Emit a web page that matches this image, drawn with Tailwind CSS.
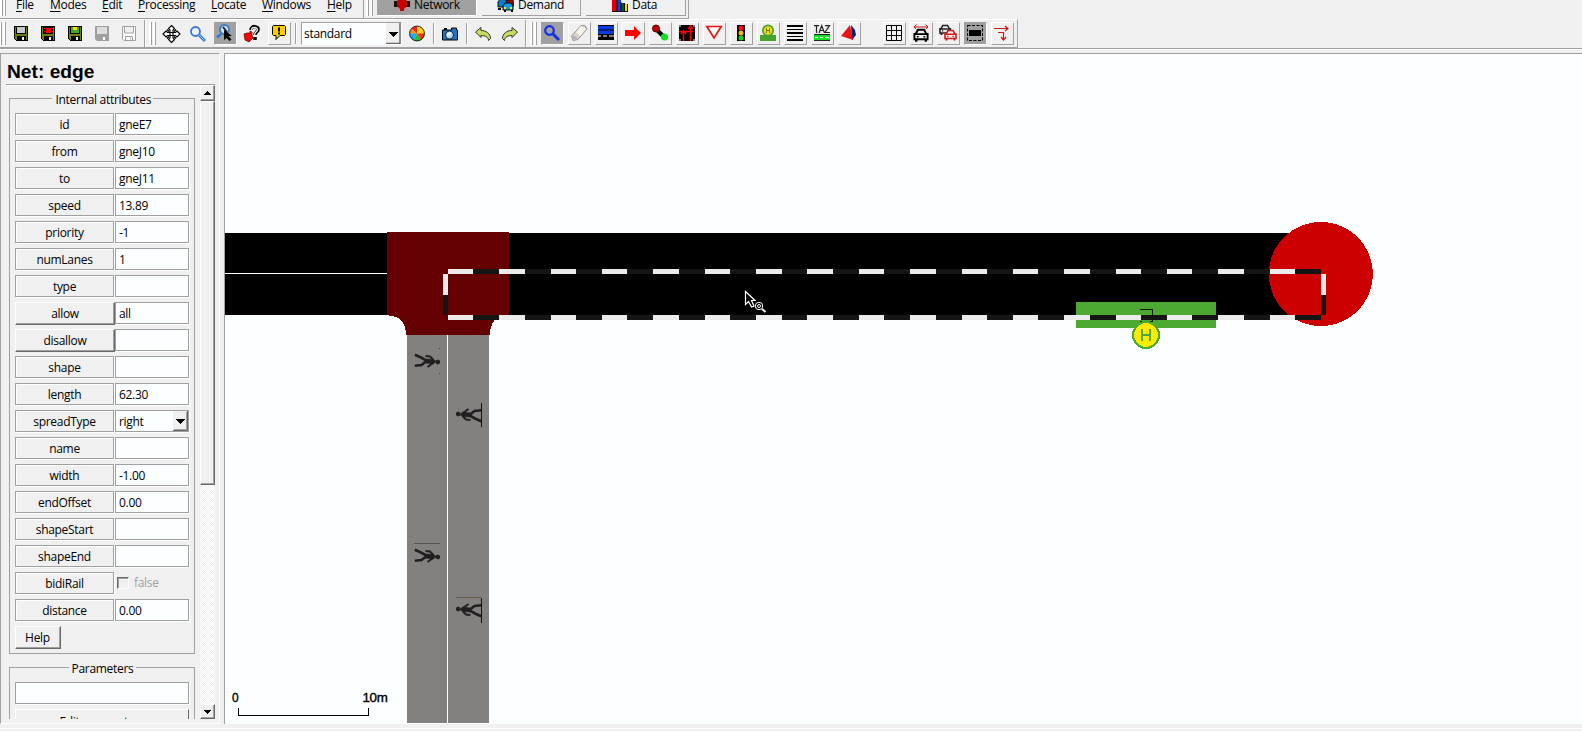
<!DOCTYPE html>
<html lang="en">
<head>
<meta charset="utf-8">
<title>netedit</title>
<script src="https://cdn.jsdelivr.net/npm/@tailwindcss/browser@4"></script>
</head>
<body class="w-[1582px] h-[731px] overflow-hidden bg-[#f0f0f0] flex flex-col text-black text-[12px] leading-4 tracking-[-0.3px] font-['Open_Sans','Noto_Sans',sans-serif]">

<!-- menu bar and supermodes -->
<div class="h-[19px] shrink-0 flex overflow-hidden">
  <div class="w-[364px] flex border-b border-r border-[#a0a0a0]">
    <div class="w-[6px] flex gap-px"><i class="w-[3px] h-[16px] border-r border-[#a0a0a0] bg-white"></i><i class="w-[2px] h-[16px] border-r border-[#a0a0a0] bg-white"></i></div>
    <div class="flex -mt-[3px] ml-[10px]" id="menu"></div>
  </div>
  <div class="w-[325px] flex border-b border-r border-[#a0a0a0] pl-[2px]">
    <div class="w-[11px] flex gap-px"><i class="w-[3px] h-[16px] border-r border-[#a0a0a0] bg-white"></i><i class="w-[3px] h-[16px] border-r border-[#a0a0a0] bg-white"></i></div>
    <div class="flex gap-[5px]">
      <div class="w-[100px] h-[16px] bg-[#a0a0a0] border-b border-r border-white flex pl-[17px] gap-[4px]"><svg class="w-[16px] h-[12px]" viewBox="0 0 16 12"><path d="M0 1h16v6H0z" fill="#111"/><path d="M5-2h5l3 3v5l-3 3v2H6V9L3 6V1z" fill="#c80000"/></svg><span class="-mt-[3px] w-[50px]">Network</span></div>
      <div class="w-[99px] h-[16px] border-b border-r border-[#a0a0a0] flex pl-[15px] gap-[4px]"><svg class="w-[17px] h-[12px]" viewBox="0 0 17 12"><path d="M8 0h8l1 6H9z" fill="#b00000" stroke="#111"/><path d="M1 2l2-3h5l2 3v5H1z" fill="#0b7dc0" stroke="#111"/><path d="M6 6l2-3h6l2 3v4H6z" fill="#1199e8" stroke="#111"/><path d="M1 8h3v2H1zM7 10h2v2H7zM14 10h2v2h-2z"/><path d="M7 7h2v2H7zM13 7h2v2h-2z" fill="#ffe600"/></svg><span class="-mt-[3px] w-[50px]">Demand</span></div>
      <div class="w-[100px] h-[16px] border-b border-r border-[#a0a0a0] flex pl-[26px] gap-[4px]"><svg class="w-[16px] h-[12px]" viewBox="0 0 16 12"><path d="M0 0h5v11H0z" fill="#e00000"/><path d="M5 0h4v11H5z" fill="#1240e0"/><path d="M9 3h3v8H9z" fill="#005c20"/><path d="M12 4h3v7h-3z" fill="#ffd800"/><path d="M0 11.500h16M5 0v11M9 2v9M12.500 3v8M15.500 4v8" stroke="#111" fill="none"/></svg><span class="-mt-[3px] w-[40px]">Data</span></div>
    </div>
  </div>
</div>

<!-- toolbars -->
<div class="h-[31px] shrink-0 border-b border-white">
<div class="h-[30px] border-b border-[#a0a0a0]">
<div class="h-[29px] w-[1018px] border-t border-t-white border-b border-r border-[#a0a0a0] flex pt-[2px]">
  <div class="w-[145px] flex border-r border-[#a0a0a0] -mt-[2px] pt-[2px]">
    <div class="w-[11px] flex gap-px"><i class="w-[2px] h-[23px] border-r border-[#a0a0a0] bg-white"></i><i class="w-[3px] h-[23px] border-r border-[#a0a0a0] bg-white"></i></div>
    <div class="flex gap-[4px]" id="bar1"></div>
  </div>
  <div class="w-[381px] flex border-r border-[#a0a0a0] -mt-[2px] pt-[2px] border-l border-l-white">
    <div class="w-[14px] pl-[3px] flex gap-px"><i class="w-[3px] h-[23px] border-r border-[#a0a0a0] bg-white"></i><i class="w-[3px] h-[23px] border-r border-[#a0a0a0] bg-white"></i></div>
    <div class="flex gap-[4px]" id="bar2"></div>
    <div class="w-[2px] h-[21px] bg-white border-l border-[#a0a0a0] ml-[4px] mt-px"></div>
    <div class="w-[101px] h-[23px] ml-[4px] bg-[#fcffff] border border-[#a0a0a0] border-b-white border-r-white flex justify-between items-center pl-[2px]"><span class="w-[50px]">standard</span><svg class="w-[15px] h-[21px]" viewBox="0 0 15 21"><path d="M0 0h15v21H0z" fill="#f0f0f0"/><path d="M14 0v20.500H0" fill="none" stroke="#696969" stroke-width="1.500"/><path d="M3 9h9v1h-1v1h-1v1H9v1H8v1H7v-1H6v-1H5v-1H4v-1H3z"/></svg></div>
    <div class="ml-[4px]" id="bar3"></div>
    <div class="w-[2px] h-[21px] bg-white border-l border-[#a0a0a0] ml-[4px] mt-px"></div>
    <div class="ml-[4px]" id="bar4"></div>
    <div class="w-[2px] h-[21px] bg-white border-l border-[#a0a0a0] ml-[4px] mt-px"></div>
    <div class="ml-[4px] flex gap-[4px]" id="bar5"></div>
  </div>
  <div class="flex border-l border-white">
    <div class="w-[14px] pl-[3px] flex gap-px"><i class="w-[3px] h-[23px] border-r border-[#a0a0a0] bg-white"></i><i class="w-[3px] h-[23px] border-r border-[#a0a0a0] bg-white"></i></div>
    <div class="flex gap-[4px]" id="bar6"></div>
    <div class="flex gap-[4px] ml-[22px]" id="bar7"></div>
  </div>
</div>
</div>
</div>

<div class="flex mt-[3px] h-[671px] shrink-0">
  <!-- attribute frame -->
  <div class="w-[220px] border-l border-t border-[#a0a0a0] border-r border-b border-r-white border-b-white pl-[5px]">
    <div class="w-[209px] h-[31px] border-b border-[#a0a0a0] shadow-[0_1px_0_#fff] pl-px pt-[7px] font-['Liberation_Sans',Arial,sans-serif] font-bold text-[19.200px] leading-[22px] tracking-normal">Net: edge</div>
    <div class="flex h-[634px]">
      <div class="w-[194px] pl-[3px] pt-[5px] h-[634px] overflow-hidden">
        <fieldset class="w-[186px] h-[564px] border border-[#a0a0a0] px-[5px]">
          <legend class="mx-auto px-[4px] h-[16px] w-[101px] text-center whitespace-nowrap leading-[20px]">Internal attributes</legend>
          <div class="flex flex-col gap-[5px] pt-[7px]" id="rows"></div>
          <div class="mt-[5px] w-[46px] h-[23px] border border-white border-r-[#696969] border-b-[#696969] text-center leading-[22px] pr-px shadow-[inset_-1px_-1px_0_#a0a0a0]">Help</div>
        </fieldset>
        <fieldset class="mt-[5px] w-[186px] h-[120px] border border-[#a0a0a0] px-[5px]">
          <legend class="mx-auto px-[3px] h-[16px] w-[67px] text-center whitespace-nowrap leading-[20px]">Parameters</legend>
          <div class="mt-[7px] w-[174px] h-[22px] border border-[#a0a0a0] bg-[#fcffff] shadow-[1px_1px_0_#fff]"></div>
          <div class="mt-[5px] w-[174px] h-[24px] border border-white border-r-[#696969] border-b-[#696969] text-center leading-[23px]">Edit parameters</div>
        </fieldset>
      </div>
      <div class="w-[15px] h-[634px] flex flex-col bg-[#f6f7f7] bg-[repeating-conic-gradient(#fff_0_25%,#efefef_0_50%)] bg-[length:2px_2px]">
        <div class="h-[16px] bg-[#f0f0f0] border border-white border-r-[#696969] border-b-[#696969] shadow-[inset_-1px_-1px_0_#a0a0a0] flex items-center justify-center"><svg class="w-[8px] h-[4px]" viewBox="0 0 8 4"><path d="M0 4h7V3H6V2H5V1H4V0H3v1H2v1H1v1H0z"/></svg></div>
        <div class="h-[384px] bg-[#f0f0f0] border border-white border-r-[#696969] border-b-[#696969] shadow-[inset_-1px_-1px_0_#a0a0a0]"></div>
        <div class="mt-auto h-[15px] bg-[#f0f0f0] border border-white border-r-[#696969] border-b-[#696969] shadow-[inset_-1px_-1px_0_#a0a0a0] flex items-center justify-center"><svg class="w-[8px] h-[4px]" viewBox="0 0 8 4"><path d="M0 0h7v1H6v1H5v1H4v1H3V3H2V2H1V1H0z"/></svg></div>
      </div>
    </div>
  </div>
  <!-- network view -->
  <div class="ml-[4px] w-[1358px] border-l border-t border-[#a0a0a0]">
  <svg class="block w-[1357px] h-[670px]" viewBox="225 54 1357 670" shape-rendering="crispEdges">
    <rect x="225" y="54" width="1357" height="670" fill="#fcffff"/>
    <rect x="225" y="233" width="1096" height="82"/>
    <rect x="225" y="273" width="162" height="1" fill="#fff"/>
    <rect x="407" y="335" width="82" height="388" fill="#82817f"/>
    <rect x="447" y="335" width="1" height="388" fill="#fff"/>
    <path d="M387 232H509V315Q490 315 490 335H406Q405 316 390 316L387 315z" fill="#640000"/>
    <circle cx="1320.800" cy="274" r="52" fill="#cc0000"/>
    <rect x="1076" y="302" width="140" height="26" fill="#4caa33"/>
    <g fill="none" stroke-width="5">
      <path d="M448 271.500H1321M448 317.500H1321" stroke="#151515"/>
      <path d="M448 271.500H1321M448 317.500H1321" stroke="#ebebeb" stroke-dasharray="25.400 25.953"/>
      <path d="M445.500 274v21M1323.500 274v21" stroke="#ebebeb"/>
      <path d="M445.500 295v20M1323.500 295v20" stroke="#151515"/>
    </g>
    <path d="M1140 309.500h12.500v12H1140" fill="none" stroke="#0c1408"/>
    <circle cx="1146" cy="335" r="14" fill="#4caa33"/>
    <circle cx="1146" cy="335" r="11.800" fill="#ffeb00"/>
    <path d="M1141 329h2v5h6v-5h2v12h-2v-5h-6v5h-2z" fill="#4caa33"/>
    <defs>
      <g id="walker" fill="#231f20" stroke="#231f20" shape-rendering="auto">
        <circle cx="23.800" cy="9" r="1.900"/>
        <path d="M10 6l9 .3 3 2-2.500 2.700-8-1z" stroke-width=".6"/>
        <path d="M12 7.300L7 4.500 .8 1.800M12 8.500L7.500 12 .8 12.800" fill="none" stroke-width="2.600"/>
        <path d="M19.500 7L16 3.500 11.500 3M19 10L13.500 14" fill="none" stroke-width="2"/>
      </g>
    </defs>
    <use href="#walker" x="414" y="353"/>
    <path d="M439 348.500h1M439 373.500h1" stroke="#444"/>
    <use href="#walker" x="414" y="548"/>
    <path d="M414 543.500h26" stroke="#555"/>
    <use href="#walker" transform="translate(482 423) rotate(180)"/>
    <path d="M481.500 403v24" stroke="#111"/>
    <use href="#walker" transform="translate(482 618) rotate(180)"/>
    <path d="M481.500 598v25" stroke="#111"/>
    <path d="M456 597.500h25" stroke="#6b5b48"/>
    <path d="M745.500 291.500v13l3-3 3 5.500 2.500-1-2.500-5.500h3.500z" fill="#000" stroke="#fff" stroke-width="1.200" shape-rendering="auto"/>
    <g fill="none" stroke="#fff" shape-rendering="auto"><circle cx="759" cy="306" r="3.700"/><circle cx="759" cy="306" r="1.500"/><path d="M762 309l3.500 3" stroke-width="2"/></g>
    <path d="M238.500 708v7.500h130V708" fill="none" stroke="#000"/>
    <g font-family="Liberation Sans, Arial, sans-serif" font-size="12" stroke="#000" stroke-width=".35"><text x="232" y="702" textLength="6">0</text><text x="362.500" y="702" textLength="25" lengthAdjust="spacingAndGlyphs">10m</text></g>
  </svg>
  </div>
</div>
<div class="mt-[4px] h-px shrink-0 bg-white"></div>

<script>
document.getElementById('menu').innerHTML = [['File',34],['Modes',52],['Edit',36],['Processing',73],['Locate',51],['Windows',65],['Help',30]]
  .map(([t,w]) => `<span class="shrink-0" style="width:${w}px"><u class="underline underline-offset-2">${t[0]}</u>${t.slice(1)}</span>`).join('');

const rows = [['id','gneE7'],['from','gneJ10'],['to','gneJ11'],['speed','13.89'],['priority','-1'],['numLanes','1'],['type',''],['allow','all'],['disallow',''],['shape',''],['length','62.30'],['spreadType','right'],['name',''],['width','-1.00'],['endOffset','0.00'],['shapeStart',''],['shapeEnd',''],['bidiRail','false'],['distance','0.00']];
const combo = `<svg class="w-[15px] h-[20px] ml-auto" viewBox="0 0 15 20"><path d="M0 0h15v20H0z" fill="#f0f0f0"/><path d="M14.500 0v19.500H0" fill="none" stroke="#696969"/><path d="M13.500 1v17.500H1" fill="none" stroke="#a0a0a0"/><path d="M3 8h9v1h-1v1h-1v1H9v1H8v1H7v-1H6v-1H5v-1H4V9H3z"/></svg>`;
document.getElementById('rows').innerHTML = rows.map(([k,v]) => {
  const raised = k === 'allow' || k === 'disallow';
  const label = `<div class="${raised
    ? 'w-[100px] h-[23px] -mb-px border border-white border-r-[#696969] border-b-[#696969] shadow-[inset_-1px_-1px_0_#a0a0a0] text-center leading-[22px]'
    : 'w-[99px] mr-px h-[22px] border border-[#a0a0a0] shadow-[1px_1px_0_#fff,inset_1px_1px_0_#fff] text-center leading-[21px]'}">${k}</div>`;
  const field = k === 'bidiRail'
    ? `<div class="flex items-center pl-[2px] gap-[5px] text-[#a0a0a0]"><i class="w-[12px] h-[12px] border border-white border-l-[#696969] border-t-[#696969] shadow-[inset_1px_1px_0_#a0a0a0]"></i><span>false</span></div>`
    : `<div class="w-[74px] h-[22px] border border-[#a0a0a0] bg-[#fcffff] shadow-[1px_1px_0_#fff] pl-[3px] leading-[21px] flex"><span>${v}</span>${k === 'spreadType' ? combo : ''}</div>`;
  return `<div class="flex h-[22px]">${label}${field}</div>`;
}).join('');

const floppy = (c, extra='') => `<g shape-rendering="crispEdges"><path d="M0 0h14v15H2l-2-2z"/><path d="M1 1h12v13H2l-1-1z" fill="#6b8010"/><path d="M2 1h10v7H2z"/><path d="M3 1h8v6H3z" fill="${c}"/><path d="M3 10h9v4H3z"/><path d="M8 11h2v3H8z" fill="#eee"/>${extra}</g>`;
const car = (c, x, y, s) => `<g transform="translate(${x} ${y}) scale(${s})" fill="#f0f0f0" stroke="${c}" stroke-width="1.600"><path d="M2 4.500L4 1h5l2 3.500h1V9H1V4.500zM1.500 4.700h10"/><path d="M2.500 9v2M10.500 9v2" stroke-width="2"/><path d="M3 6.800h1.500M8.500 6.800H10" stroke-width="1.300"/></g>`;
const icons = {
  save: floppy('#c4c8c8'),
  saveNet: floppy('#000','<path d="M5 2h5v5H5z" fill="#f00"/><path d="M3 2h1v1H3zM11 2h1v1h-1zM3 5h1v1H3zM11 5h1v1h-1z" fill="#f00"/>'),
  saveAdd: floppy('#3fa82c','<path d="M5 1h4v3H5z" fill="#ffe100"/>'),
  saveOff: `<path d="M0 0h14v15H2l-2-2z" fill="#a0a0a0"/><path d="M2 1h10v7H2z" fill="#ddd"/><path d="M8 11h2v3H8z" fill="#fff"/>`,
  saveOff2: `<path d="M.5.500h13v14H2L.5 13zM2.500 1v6h9V1M3.500 14.500v-4h7v4M8.500 11.500v2" fill="#fff" stroke="#a0a0a0"/>`,
  move: `<g fill="#fff" stroke="#000" stroke-width="1.100" transform="translate(.5 0)"><path d="M8-.5l3 3L9.500 4v2.500h-3V4L5 2.500zM8 16.500l3-3L9.500 12V9.500h-3V12L5 13.500zM-.5 8l3-3L4 6.500h2.500v3H4L2.500 11zM16.500 8l-3-3L12 6.500H9.500v3H12l1.500 1.500z"/><path d="M3.500 3.500l2 2M12.500 3.500l-2 2M3.500 12.500l2-2M12.500 12.500l-2-2" stroke-width="1.500"/></g>`,
  zoom: `<path d="M9 9l6 6" stroke="#2f7ad0" stroke-width="3"/><path d="M9 9l5.500 5.500" stroke="#8fc8f4"/><circle cx="5.500" cy="5.500" r="4.500" fill="#eaf4fc" stroke="#3b74d8" stroke-width="1.800"/>`,
  zoomSel: `<path d="M4 9l-4 3.500" stroke="#2f7ad0" stroke-width="2.500"/><circle cx="7.500" cy="4.500" r="4.500" fill="#d7e4ee" stroke="#3b80c8" stroke-width="2"/><path d="M6 2l4 5" stroke="#223" stroke-width="2"/><path d="M7 5v10l2.500-2 3 3 2-1.500-3-3.500H15z"/>`,
  help: `<path d="M7 4c0-5 8-4 7 0-.5 2-3 2-3 5M11 11v3" fill="none" stroke="#000" stroke-width="3.500"/><path d="M7.500 4c0-4 6-3 6 0-.5 2-3 2-3 5" fill="none" stroke="#eee" stroke-width="1.300"/><path d="M0 8l3-1h3V5l2 1v3l1 3-4 4-4-2z" fill="#f00" stroke="#600" stroke-width=".7"/>`,
  warn: `<path d="M2.500.500h11l1 1v8l-1 1H9l-4 4v-4H2.500l-1-1v-8z" fill="#ffcc00" stroke="#000"/><path d="M8 2.500v4M8 7.500v2" stroke="#000" stroke-width="2"/>`,
  wheel: `<g transform="translate(0 -.5)"><circle cx="8" cy="8" r="7.500" fill="#ffd21c"/><path d="M8 8L2.500 3A7.500 7.500 0 0 1 8 .5z" fill="#f22"/><path d="M8 8L.5 8A7.500 7.500 0 0 1 2.500 3z" fill="#ff8c1c"/><path d="M8 8L5 15A7.500 7.500 0 0 1 .5 8z" fill="#22a6ff"/><path d="M8 8l4 6.500a7.500 7.500 0 0 1-7 .5z" fill="#20c030"/><path d="M8 8h7.500a7.500 7.500 0 0 1-3.500 6.500z" fill="#f7301c"/><circle cx="8" cy="8" r="7.400" fill="none" stroke="#222"/></g>`,
  camera: `<path d="M.5 4h9V2h5v2h1v10H.5z" fill="#1c78c4" stroke="#000"/><path d="M2 2h3v2H2z"/><circle cx="7.500" cy="9" r="4" fill="#b8dcf8" stroke="#123"/><path d="M5.500 9l3-2.500" stroke="#fff" stroke-width="2"/>`,
  undo: `<path d="M.5 6L6 1.500v3c5 0 9.500 3 9.500 8l-2 2c0-3.500-3.500-5-7.500-5v2z" fill="#c5dc60" stroke="#333"/>`,
  redo: `<path d="M15.500 6L10 1.500v3c-5 0-9.500 3-9.500 8l2 2c0-3.500 3.500-5 7.500-5v2z" fill="#c5dc60" stroke="#333"/>`,
  inspect: `<path d="M9 9l6 6" stroke="#1030e8" stroke-width="3"/><circle cx="5.500" cy="5.500" r="4.300" fill="none" stroke="#1030e8" stroke-width="2.200"/>`,
  erase: `<path d="M.5 11L10 .5h4L16 4 7 14.500l-5 1z" fill="#dcd2c4" stroke="#999"/><path d="M1 11h3l3 3-4 1z" fill="#b5b5b5"/><path d="M10 1L5 7l4 4 6-7z" fill="#fbf7ee"/>`,
  edge: `<path d="M0 0h16v15H0z"/><path d="M0 1h16v8H0z" fill="#1038e0"/><path d="M0 5h16" stroke="#000"/><path d="M0 11h3M5 11h4M11 11h5" stroke="#fff"/>`,
  arrow: `<path d="M0 5h9V1l7 7-7 7v-4H0z" fill="#f00"/>`,
  connect: `<path d="M4 4l8 8" stroke="#000" stroke-width="4"/><circle cx="4" cy="3.500" r="3.500" fill="#c00000" stroke="#500"/><circle cx="12.500" cy="12" r="3.500" fill="#10e020"/>`,
  prohibit: `<path d="M0 0h16v16H0z"/><path d="M0 1h2M14 1h2M0 15h2M14 15h2" stroke="#fff"/><path d="M4.500 16V7M2 9l2.500-3L7 9M11.500 16V3M9 4l2.500-3L14 4M0 6.500h14" stroke="#f00" stroke-width="1.500" fill="none"/>`,
  yield: `<path d="M.8 1.500h14.400L8 13z" fill="#fff" stroke="#e01515" stroke-width="1.700"/>`,
  tls: `<path d="M4 0h8v16H4z"/><circle cx="8" cy="3" r="2.500" fill="#f11"/><circle cx="8" cy="8" r="2.500" fill="#ffb400"/><circle cx="8" cy="13" r="2.500" fill="#12d812"/>`,
  stop: `<path d="M0 10h16v6H0z" fill="#44a22e"/><circle cx="8" cy="5.500" r="6" fill="#44a22e"/><circle cx="8" cy="5.500" r="4.300" fill="#f5dc10"/><path d="M6.500 3v5M9.500 3v5M6.500 5.500h3" stroke="#6b8010"/>`,
  crossing: `<path d="M0 0h16v2H0zM0 4h16v1H0zM0 7h16v2H0zM0 11h16v1H0zM0 14h16v2H0z"/>`,
  taz: `<path d="M0 .7h5M2.500 .7V8M5 8L7.700 .7 10.500 8M6 5.500h3.500M11 .7h4.500L11 7.500h5" stroke="#222" stroke-width="1.200" fill="none"/><path d="M0 9h16v7H0z" fill="#10e020"/><path d="M0 9.500h16M0 15.500h16" stroke="#222"/><path d="M1 12.500h3M6 12.500h3M11 12.500h4" stroke="#fff"/>`,
  poly: `<path d="M10 0l4 5 1 5-4 5z" fill="#10206e"/><path d="M9 0l3 15-12-4z" fill="#e81515"/>`,
  grid: `<path d="M.5.500h15v15H.5zM5.500 0v16M10.500 0v16M0 5.500h16M0 10.500h16" fill="none" stroke="#000"/>`,
  spread: car('#000',.2,3.500,1.200) + `<path d="M1 2h14M3.500-.5L1 2l2.500 2.500M12.500-.5L15 2l-2.500 2.500" fill="none" stroke="#c81818"/>`,
  cars: car('#222',-1,-.5,.95) + car('#d01818',4,4.500,1),
  sel: `<path d="M.5.500h15v15H.5z" fill="none" stroke="#000" stroke-dasharray="3 1.500"/><path d="M2 5h12v6H2z"/>`,
  lanes: `<path d="M0 3.500h14M11 1l3 2.500L11 6M4 7.500h5.500V15M7 12l2.500 3 2.500-3" fill="none" stroke="#c81818" stroke-width="1.200"/>`
};
const flat = 'w-[23px] h-[23px] pl-[3px] pt-[4px]';
const raised = 'w-[23px] h-[23px] pl-[2px] pt-[2px] border border-white border-r-[#a0a0a0] border-b-[#a0a0a0]';
const sunk = 'w-[23px] h-[23px] pl-[2px] pt-[2px] bg-[#a0a0a0] border border-[#a0a0a0] border-r-white border-b-white';
const fill = (id, list) => document.getElementById(id).innerHTML = list.map(([n, c]) =>
  `<div class="${c}"><svg class="block w-[16px] h-[16px] overflow-visible" viewBox="0 0 16 16">${icons[n]}</svg></div>`).join('');
fill('bar1', [['save',flat],['saveNet',flat],['saveAdd',flat],['saveOff',flat],['saveOff2',flat]]);
fill('bar2', [['move',flat],['zoom',flat],['zoomSel',sunk],['help',flat],['warn',raised]]);
fill('bar3', [['wheel',flat]]);
fill('bar4', [['camera',flat]]);
fill('bar5', [['undo',flat],['redo',flat]]);
fill('bar6', [['inspect',sunk],['erase',raised],['edge',raised],['arrow',raised],['connect',raised],['prohibit',raised],['yield',raised],['tls',raised],['stop',raised],['crossing',raised],['taz',raised],['poly',raised]]);
fill('bar7', [['grid',raised],['spread',raised],['cars',raised],['sel',sunk],['lanes',raised]]);
</script>
</body>
</html>
